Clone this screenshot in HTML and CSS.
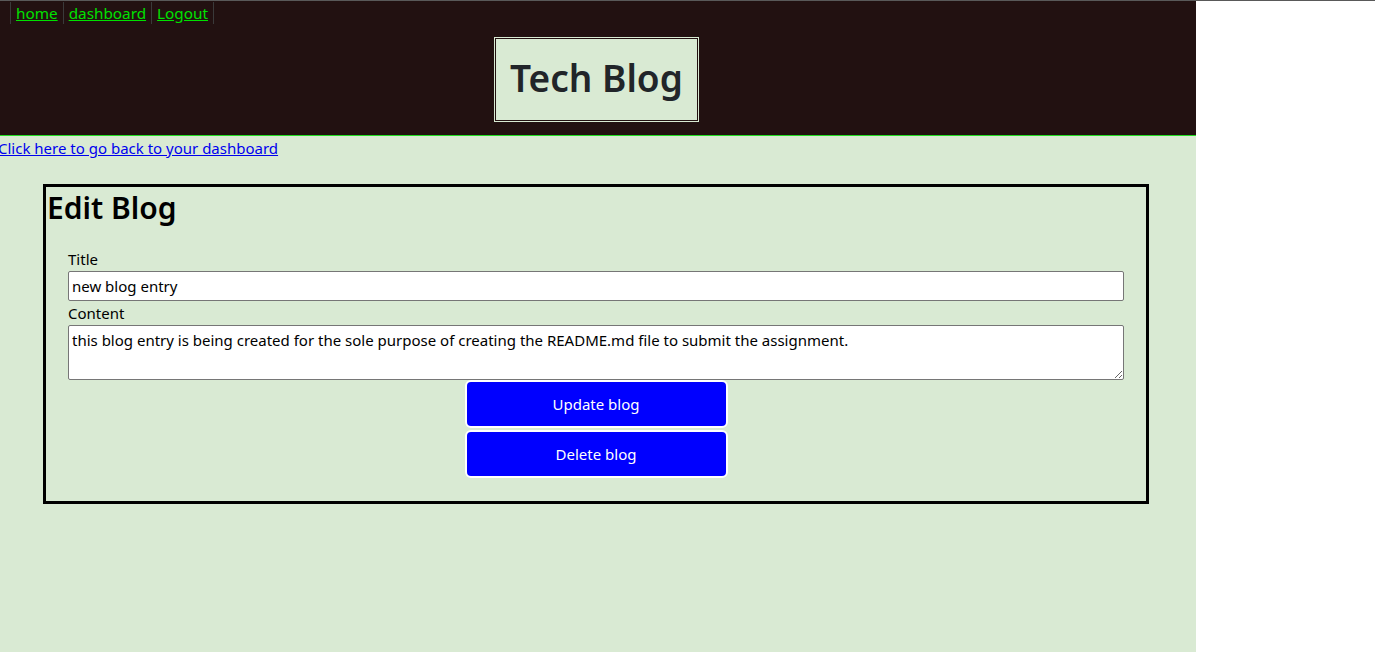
FILE: index.html
```html
<!DOCTYPE html>
<html>
<head>
<meta charset="utf-8">
<title>Tech Blog</title>
<link rel="stylesheet" href="styles.css">
</head>
<body>
<div class="page">
  <header class="site-header">
    <nav class="nav">
      <ul class="nav-list">
        <li class="nav-item"><a href="#" class="nav-link">home</a></li>
        <li class="nav-item"><a href="#" class="nav-link">dashboard</a></li>
        <li class="nav-item"><a href="#" class="nav-link">Logout</a></li>
      </ul>
    </nav>
    <div class="title-wrap">
      <h1 class="site-title">Tech Blog</h1>
    </div>
  </header>
  <main class="main">
    <a href="#" class="back-link">Click here to go back to your dashboard</a>
    <section class="edit-box">
      <h2 class="edit-title">Edit Blog</h2>
      <form class="edit-form">
        <label class="field-label" for="title">Title</label>
        <input class="field-input" id="title" type="text" value="new blog entry">
        <label class="field-label" for="content">Content</label>
        <textarea class="field-textarea" id="content">this blog entry is being created for the sole purpose of creating the README.md file to submit the assignment.</textarea>
        <div class="buttons">
          <button type="button" class="btn">Update blog</button>
          <button type="button" class="btn">Delete blog</button>
        </div>
      </form>
    </section>
  </main>
</div>
</body>
</html>
```
FILE: styles.css
```css
html, body {
  margin: 0;
  padding: 0;
  height: 100%;
}
body {
  background: #ffffff;
  border-top: 1px solid #595959;
  box-sizing: border-box;
  font-family: "Noto Sans", "Open Sans", sans-serif;
  font-size: 15px;
}
.page {
  width: 1196px;
  min-height: 651px;
  background: #d9ead3;
}
.site-header {
  background: #221111;
  height: 134px;
  border-bottom: 1px solid #22dd22;
}
.nav-list {
  list-style: none;
  margin: 0;
  padding: 1px 0 0 10px;
  display: flex;
  font-size: 15.3px;
}
.nav-item {
  border-left: 1px solid #3a3a3a;
  padding: 0 5px;
  line-height: 22px;
}
.nav-item:last-child {
  border-right: 1px solid #3a3a3a;
}
.nav-link {
  color: #00e000;
}
.title-wrap {
  display: flex;
  justify-content: center;
  padding: 13px 3px 0 0;
}
.site-title {
  margin: 0;
  background: #d9ead3;
  border: 1px solid #d9ead3;
  box-shadow: inset 0 0 0 1px #221111;
  color: #212529;
  font-size: 37px;
  font-weight: 600;
  width: 205px;
  height: 85px;
  padding-bottom: 5px;
  box-sizing: border-box;
  display: flex;
  align-items: center;
  justify-content: center;
}
.main {
  padding-top: 2px;
}
.back-link {
  display: block;
  color: #0000ee;
  margin-left: -2px;
  line-height: 20px;
}
.edit-box {
  margin: 26px 0 0 43px;
  width: 1106px;
  height: 320px;
  box-sizing: border-box;
  border: 3px solid #000;
  padding: 2px 1px;
}
.edit-title {
  margin: 0;
  font-size: 30px;
  font-weight: 600;
  line-height: 38px;
  color: #000;
}
.edit-form {
  margin: 21px 21px 0 21px;
  display: flex;
  flex-direction: column;
}
.field-label {
  line-height: 23px;
  color: #000;
}
.field-input {
  height: 30px;
  box-sizing: border-box;
  border: 1px solid #767676;
  border-radius: 2px;
  font: inherit;
  padding: 0 3px;
  margin: 0;
  background: #fff;
}
.field-input + .field-label {
  margin-top: 1px;
}
.field-textarea {
  height: 55px;
  box-sizing: border-box;
  border: 1px solid #767676;
  border-radius: 2px;
  font: inherit;
  padding: 4px 3px;
  margin: 0;
  resize: vertical;
}
.buttons {
  display: flex;
  flex-direction: column;
  align-items: center;
  gap: 2px;
  margin-top: 0;
}
.btn {
  width: 263px;
  height: 48px;
  background: #0000ff;
  color: #fff;
  border: 2px solid #fff;
  border-radius: 6px;
  font: inherit;
}
```
